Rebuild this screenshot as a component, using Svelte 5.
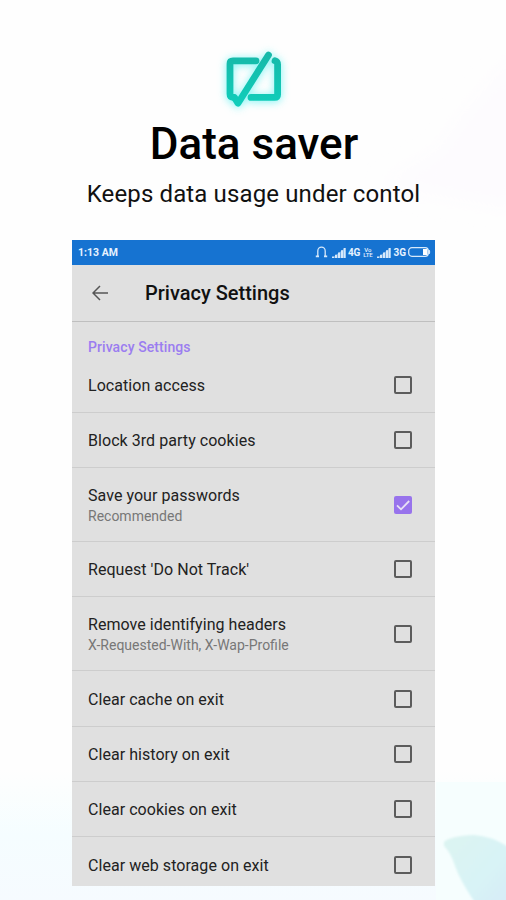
<script lang="ts">
	interface Setting {
		title: string;
		summary?: string;
		checked: boolean;
	}

	let settings: Setting[] = $state([
		{ title: "Location access", checked: false },
		{ title: "Block 3rd party cookies", checked: false },
		{ title: "Save your passwords", summary: "Recommended", checked: true },
		{ title: "Request 'Do Not Track'", checked: false },
		{
			title: "Remove identifying headers",
			summary: "X-Requested-With, X-Wap-Profile",
			checked: false
		},
		{ title: "Clear cache on exit", checked: false },
		{ title: "Clear history on exit", checked: false },
		{ title: "Clear cookies on exit", checked: false },
		{ title: "Clear web storage on exit", checked: false }
	]);
</script>

{#snippet signal()}
	<svg class="signal" viewBox="0 0 14 11" width="14" height="11" aria-hidden="true">
		<path d="M0 11L13.6 .8V11z" fill="#d7e9fb" opacity="0.45" />
		<path d="M0 11V9.6h2V11zM3 11V7.8h2V11zM6 11V5.5h2V11zM9 11V3.2h2V11zM11.6 11V1h2v10z" fill="#d7e9fb" />
	</svg>
{/snippet}

<main>
	<!-- soft decorative shapes behind the phone -->
	<svg class="backdrop" viewBox="0 0 506 900" aria-hidden="true">
		<defs>
			<linearGradient id="wash" x1="0" y1="0" x2="0" y2="1">
				<stop offset="0" stop-color="#f5feff" stop-opacity="0" />
				<stop offset="0.5" stop-color="#f5fdff" />
				<stop offset="1" stop-color="#f6fbff" />
			</linearGradient>
			<linearGradient id="gem" x1="0" y1="0" x2="1" y2="1">
				<stop offset="0" stop-color="#dcf4f1" />
				<stop offset="0.6" stop-color="#d8f3f6" />
				<stop offset="1" stop-color="#d7eaf8" />
			</linearGradient>
			<filter id="soft" x="-20%" y="-20%" width="140%" height="140%">
				<feGaussianBlur stdDeviation="10" />
			</filter>
			<filter id="edge">
				<feGaussianBlur stdDeviation="1" />
			</filter>
		</defs>
		<path d="M520 50L462 115L440 150L380 185L520 210Z" fill="#fdfbfe" filter="url(#soft)" />
		<path d="M0 770H506V900H0Z" fill="url(#wash)" />
		<path d="M436 782H506V900H436Z" fill="#f6fefe" />
		<path
			d="M444 842Q450 836 474 835Q492 836 510 848V910H480Q461 883 455 866Q451 853 444 846Z"
			fill="url(#gem)"
			filter="url(#edge)"
		/>
	</svg>

	<section class="hero">
		<svg class="logo" viewBox="0 0 76 76" width="76" height="76" aria-hidden="true">
			<defs>
				<linearGradient id="teal" x1="0" y1="12" x2="0" y2="64" gradientUnits="userSpaceOnUse">
					<stop offset="0" stop-color="#17b8a8" />
					<stop offset="1" stop-color="#10cdba" />
				</linearGradient>
			</defs>
			<g fill="none" stroke="url(#teal)" stroke-width="6.8" stroke-linecap="round" stroke-linejoin="round">
				<path d="M41 20.8H18Q15 20.8 15 23.8V54Q15 57 18 57.3" />
				<path d="M60 20.8Q62.6 21.5 62.6 24.4V54.4Q62.6 57.4 59.6 57.4H36" />
				<path d="M53.5 15L23 63.2L19.5 57.5" />
			</g>
		</svg>
		<h1>Data saver</h1>
		<p>Keeps data usage under contol</p>
	</section>

	<section class="phone">
		<div class="status">
			<span class="time">1:13 AM</span>
			<div class="indicators">
				<svg viewBox="0 0 13 12" width="13" height="12" aria-hidden="true">
					<path d="M2.8 10V5a3.7 3.9 0 0 1 7.4 0v5" fill="none" stroke="#d7e9fb" stroke-width="1.3" />
					<path d="M.8 10.4H4M9 10.4h3.2" stroke="#d7e9fb" stroke-width="1.8" />
				</svg>
				{@render signal()}
				<span class="net">4G</span>
				<span class="volte"><span>Vo</span><span>LTE</span></span>
				{@render signal()}
				<span class="net">3G</span>
				<svg class="battery" viewBox="0 0 23 10" width="23" height="10" aria-hidden="true">
					<rect x="0.7" y="0.7" width="19.6" height="8.6" rx="3.2" fill="none" stroke="#d7e9fb" stroke-width="1.3" />
					<path d="M15 2h4.5v6H15z" fill="#fff" />
					<path d="M21 3q1.6 2 0 4z" fill="#fff" stroke="#d7e9fb" />
				</svg>
			</div>
		</div>

		<header>
			<svg viewBox="0 0 16 16" width="16" height="16" aria-hidden="true">
				<path d="M16 8H1.2M8 1L1 8l7 7" fill="none" stroke="#555" stroke-width="1.5" />
			</svg>
			<h2>Privacy Settings</h2>
		</header>

		<h3>Privacy Settings</h3>
		<div class="list">
			{#each settings as setting}
				<label class="row" class:tall={setting.summary}>
					<span class="text">
						<span class="title">{setting.title}</span>
						{#if setting.summary}
							<span class="summary">{setting.summary}</span>
						{/if}
					</span>
					<input type="checkbox" bind:checked={setting.checked} />
					<span class="box">
						{#if setting.checked}
							<svg viewBox="0 0 18 18" width="18" height="18" aria-hidden="true">
								<path d="M3 9.3l4 4L15.2 5" fill="none" stroke="#e8e0f5" stroke-width="1.8" />
							</svg>
						{/if}
					</span>
				</label>
			{/each}
		</div>
	</section>
</main>

<style>
	:global(body) {
		background: #fefefe;
	}

	main {
		position: relative;
		height: 900px;
		overflow: hidden;
		font-family: Roboto, "Liberation Sans", sans-serif;
		color: #000;
	}

	h1,
	h2,
	h3,
	p {
		margin: 0;
	}

	.backdrop {
		position: absolute;
		inset: 0;
		width: 506px;
		height: 900px;
	}

	.hero {
		position: relative;
		height: 240px;
		padding-top: 40px;
		box-sizing: border-box;
		display: flex;
		flex-direction: column;
		align-items: center;
	}

	.logo {
		overflow: visible;
		filter: drop-shadow(0 1px 4px rgba(60, 240, 240, 0.7));
	}

	h1 {
		margin-top: 2px;
		padding-left: 2px;
		font-size: 44px;
		line-height: 52px;
		font-weight: 500;
	}

	p {
		margin-top: 9px;
		padding-left: 1px;
		font-size: 24px;
		line-height: 30px;
		letter-spacing: 0.13px;
		color: #111;
	}

	.phone {
		position: relative;
		width: 363px;
		height: 646px;
		margin-left: 72px;
		overflow: hidden;
		background: #e0e0e0;
	}

	.status {
		display: flex;
		align-items: center;
		justify-content: space-between;
		height: 24.5px;
		padding: 0 4px 0 6px;
		box-sizing: border-box;
		background: #1673d1;
		color: #e6f2ff;
	}

	.time {
		font-size: 10.5px;
		font-weight: 700;
	}

	.indicators {
		display: flex;
		align-items: center;
		gap: 2px;
	}

	.signal {
		margin-left: 2px;
	}

	.net {
		font-size: 10px;
		font-weight: 700;
	}

	.volte {
		display: flex;
		flex-direction: column;
		align-items: center;
		width: 11px;
		font-size: 6px;
		line-height: 5.5px;
		font-weight: 500;
	}

	header {
		display: flex;
		align-items: center;
		gap: 37px;
		height: 57.5px;
		padding-left: 20px;
		box-sizing: border-box;
		border-bottom: 1px solid #bfbfbf;
	}

	h2 {
		font-size: 20px;
		font-weight: 500;
		color: #111;
	}

	h3 {
		height: 35.6px;
		padding: 16px 16px 0;
		box-sizing: border-box;
		font-size: 14px;
		line-height: 19px;
		font-weight: 500;
		letter-spacing: 0.08px;
		color: #9b7df0;
	}

	.row {
		display: flex;
		align-items: center;
		justify-content: space-between;
		height: 55.3px;
		padding: 0 23px 0 16px;
		box-sizing: border-box;
		border-bottom: 1px solid #cdcdcd;
	}

	.row.tall {
		height: 74px;
	}

	.text {
		display: flex;
		flex-direction: column;
		padding-top: 2px;
	}

	.title {
		font-size: 16px;
		line-height: 22px;
		letter-spacing: 0.05px;
		color: #222;
	}

	.summary {
		font-size: 14px;
		line-height: 19px;
		color: #777;
	}

	input {
		position: absolute;
		opacity: 0;
	}

	.box {
		width: 18px;
		height: 18px;
		box-sizing: border-box;
		border: 2px solid #5c5c5c;
		border-radius: 2px;
	}

	input:checked + .box {
		border: none;
		background: #9873ec;
	}

	.box svg {
		display: block;
	}
</style>
